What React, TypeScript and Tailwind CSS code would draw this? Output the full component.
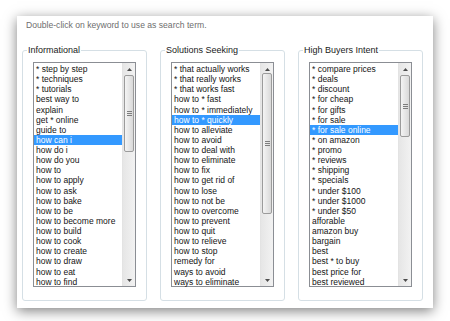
const informational = [
  "* step by step",
  "* techniques",
  "* tutorials",
  "best way to",
  "explain",
  "get * online",
  "guide to",
  "how can i",
  "how do i",
  "how do you",
  "how to",
  "how to apply",
  "how to ask",
  "how to bake",
  "how to be",
  "how to become more",
  "how to build",
  "how to cook",
  "how to create",
  "how to draw",
  "how to eat",
  "how to find",
];

const solutions = [
  "* that actually works",
  "* that really works",
  "* that works fast",
  "how to * fast",
  "how to * immediately",
  "how to * quickly",
  "how to alleviate",
  "how to avoid",
  "how to deal with",
  "how to eliminate",
  "how to fix",
  "how to get rid of",
  "how to lose",
  "how to not be",
  "how to overcome",
  "how to prevent",
  "how to quit",
  "how to relieve",
  "how to stop",
  "remedy for",
  "ways to avoid",
  "ways to eliminate",
];

const buyers = [
  "* compare prices",
  "* deals",
  "* discount",
  "* for cheap",
  "* for gifts",
  "* for sale",
  "* for sale online",
  "* on amazon",
  "* promo",
  "* reviews",
  "* shipping",
  "* specials",
  "* under $100",
  "* under $1000",
  "* under $50",
  "afforable",
  "amazon buy",
  "bargain",
  "best",
  "best * to buy",
  "best price for",
  "best reviewed",
];

const groups = [
  { title: "Informational", items: informational, selected: 7, thumbTop: 12, thumbHeight: 77 },
  { title: "Solutions Seeking", items: solutions, selected: 5, thumbTop: 10, thumbHeight: 141 },
  { title: "High Buyers Intent", items: buyers, selected: 6, thumbTop: 12, thumbHeight: 62 },
];

// windows-style vertical scrollbar
function ScrollBar({ top, height }: { top: number; height: number }) {
  return (
    <div className="relative w-[13px] shrink-0 border-l border-[#e3e3e3] bg-gradient-to-r from-[#e6e6e6] to-[#f2f2f2]">
      <div className="flex h-[12px] items-center justify-center">
        <svg width="5" height="3" viewBox="0 0 5 3">
          <path d="M0 3 L2.5 0 L5 3 Z" fill="#4d4d4d" />
        </svg>
      </div>
      <div
        className="absolute left-[1px] right-[1px] flex flex-col items-center justify-center gap-[1px] rounded-[2px] border border-[#9b9b9b] bg-gradient-to-r from-[#f4f4f4] to-[#d9d9d9]"
        style={{ top, height }}
      >
        <div className="h-px w-[5px] bg-[#7d7d7d]" />
        <div className="h-px w-[5px] bg-[#7d7d7d]" />
        <div className="h-px w-[5px] bg-[#7d7d7d]" />
      </div>
      <div className="absolute bottom-0 left-0 right-0 flex h-[12px] items-center justify-center">
        <svg width="5" height="3" viewBox="0 0 5 3">
          <path d="M0 0 L2.5 3 L5 0 Z" fill="#4d4d4d" />
        </svg>
      </div>
    </div>
  );
}

function KeywordGroup({
  title,
  items,
  selected,
  thumbTop,
  thumbHeight,
}: (typeof groups)[number]) {
  return (
    <fieldset className="w-[125px] rounded-[3px] border border-[#d5dfe5] pb-[13px]">
      <legend className="ml-[4px] px-px text-[9px] leading-[10px] text-[#1a1a1a]">
        {title}
      </legend>
      <div className="ml-[10px] mt-[7px] flex h-[225px] w-[103px] border border-[#8b8e94] bg-white">
        <ul className="flex-1 pt-px">
          {items.map((item, i) => (
            <li
              key={item}
              className={
                i === selected
                  ? "h-[10.14px] whitespace-nowrap bg-[#3399ff] pl-[2px] text-[8.5px] leading-[10.14px] text-white"
                  : "h-[10.14px] whitespace-nowrap pl-[2px] text-[8.5px] leading-[10.14px] text-[#141414]"
              }
            >
              {item}
            </li>
          ))}
        </ul>
        <ScrollBar top={thumbTop} height={thumbHeight} />
      </div>
    </fieldset>
  );
}

export default function App() {
  return (
    <div
      className="h-[321px] w-[450px] overflow-hidden bg-white pl-[17px] pt-[16px]"
      style={{ fontFamily: '"Liberation Sans", Arial, sans-serif' }}
    >
      <div className="w-[416px] bg-white px-[5px] pb-[7px] pt-[3px] shadow-[0_3px_12px_rgba(0,0,0,0.5)]">
        <p className="pl-[4px] text-[8.6px] leading-[12px] text-[#6e6e6e]">
          Double-click on keyword to use as search term.
        </p>
        <div className="mt-[14px] flex gap-[13px]">
          {groups.map((g) => (
            <KeywordGroup key={g.title} {...g} />
          ))}
        </div>
      </div>
    </div>
  );
}
